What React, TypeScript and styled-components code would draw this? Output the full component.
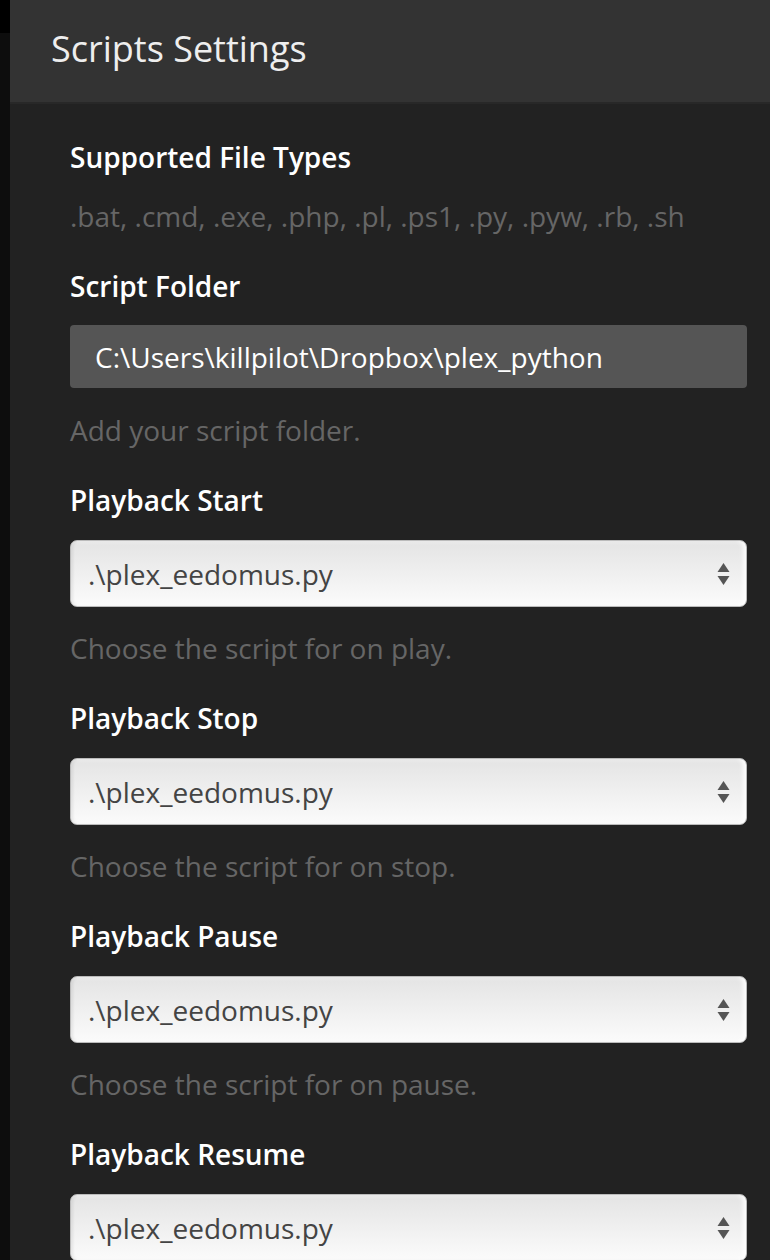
import { createGlobalStyle, styled } from 'styled-components'

const Global = createGlobalStyle`
  html, body {
    margin: 0;
    padding: 0;
    background: #222;
    overflow: hidden;
  }
  body {
    font-family: 'Open Sans', 'Noto Sans', sans-serif;
  }
`

const Page = styled.div`
  display: flex;
  width: 770px;
  height: 1260px;
  overflow: hidden;
`

const Rail = styled.div`
  width: 10px;
  flex-shrink: 0;
  background: #0d0d0d;
  display: flex;
  flex-direction: column;
`

const RailTop = styled.div`
  height: 33px;
  background: #000;
`

const Main = styled.div`
  flex: 1;
  display: flex;
  flex-direction: column;
  background: #222;
  overflow: hidden;
`

const Header = styled.header`
  flex-shrink: 0;
  height: 102px;
  background: #333;
  border-bottom: 2px solid #282828;
  display: flex;
  align-items: flex-start;
  padding: 0 41px;
`

const Title = styled.h1`
  margin: 0;
  padding-top: 26px;
  font-size: 36px;
  font-weight: 400;
  line-height: 46px;
  color: #eee;
`

const Body = styled.div`
  flex-shrink: 0;
  padding: 35px 23px 0 60px;
  display: flex;
  flex-direction: column;
  gap: 34px;
`

const Group = styled.div`
  display: flex;
  flex-direction: column;
`

const Label = styled.div`
  font-size: 28px;
  font-weight: 600;
  line-height: 36px;
  color: #fff;
`

const Help = styled.div<{ $gap?: number }>`
  margin-top: ${p => p.$gap ?? 23}px;
  font-size: 28px;
  line-height: 36px;
  color: #666;
`

const TextBox = styled.div`
  margin-top: 21px;
  height: 63px;
  box-sizing: border-box;
  background: #555;
  border-radius: 4px;
  padding: 0 25px;
  display: flex;
  align-items: center;
  font-size: 28px;
  color: #fff;
`

const Select = styled.div`
  margin-top: 22px;
  height: 67px;
  box-sizing: border-box;
  border-radius: 7px;
  border: 1px solid #bbb;
  background: linear-gradient(#e4e4e4, #fbfbfb);
  box-shadow: inset -3px 0 4px rgba(255, 255, 255, 0.9),
    inset 2px 0 3px rgba(0, 0, 0, 0.08);
  padding: 0 16px 0 17px;
  display: flex;
  align-items: center;
  justify-content: space-between;
  font-size: 28px;
  color: #444;
`

const Arrows = () => (
  <svg width="13" height="24" viewBox="0 0 13 24">
    <path d="M6.5 1 L12.5 10 L0.5 10 Z" fill="#555" />
    <path d="M0.5 14 L12.5 14 L6.5 23 Z" fill="#555" />
  </svg>
)

const scripts = [
  { label: 'Playback Start', help: 'Choose the script for on play.' },
  { label: 'Playback Stop', help: 'Choose the script for on stop.' },
  { label: 'Playback Pause', help: 'Choose the script for on pause.' },
  { label: 'Playback Resume', help: 'Choose the script for on resume.' },
]

export default function App() {
  return (
    <Page>
      <Global />
      <Rail>
        <RailTop />
      </Rail>
      <Main>
        <Header>
          <Title>Scripts Settings</Title>
        </Header>
        <Body>
          <Group>
            <Label>Supported File Types</Label>
            <Help>.bat, .cmd, .exe, .php, .pl, .ps1, .py, .pyw, .rb, .sh</Help>
          </Group>
          <Group>
            <Label>Script Folder</Label>
            <TextBox>C:\Users\killpilot\Dropbox\plex_python</TextBox>
            <Help $gap={24}>Add your script folder.</Help>
          </Group>
          {scripts.map(s => (
            <Group key={s.label}>
              <Label>{s.label}</Label>
              <Select>
                <span>.\plex_eedomus.py</span>
                <Arrows />
              </Select>
              <Help>{s.help}</Help>
            </Group>
          ))}
        </Body>
      </Main>
    </Page>
  )
}
